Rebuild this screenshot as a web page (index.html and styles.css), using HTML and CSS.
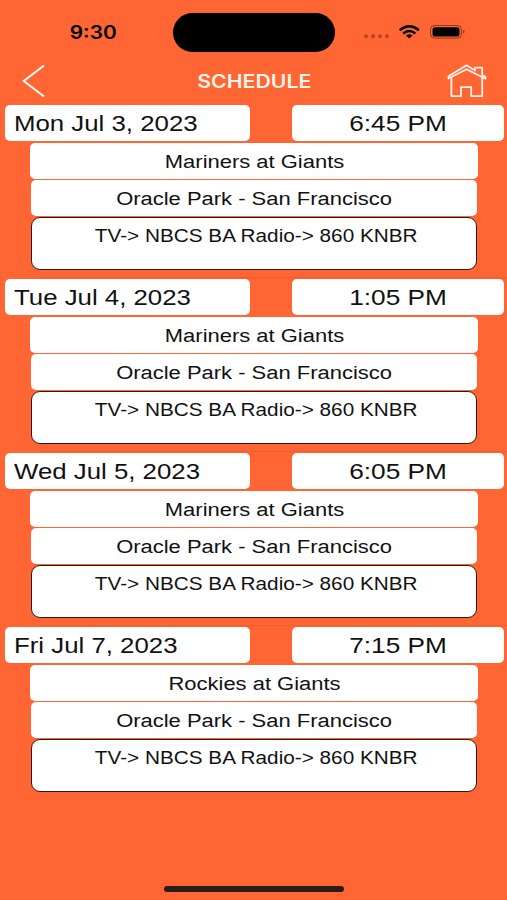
FILE: index.html
```html
<!DOCTYPE html>
<html lang="en">
<head>
    <meta charset="UTF-8">
    <title>Schedule</title>
    <link rel="stylesheet" href="styles.css">
</head>
<body>
    <div class="status-bar">
        <div class="clock"><span>9:30</span></div>
        <div class="island"></div>
        <svg class="status-icons" width="104" height="20" viewBox="0 0 104 20">
            <g fill="#000" fill-opacity="0.3">
                <circle cx="3" cy="14.3" r="2"/>
                <circle cx="10" cy="14.3" r="2"/>
                <circle cx="17" cy="14.3" r="2"/>
                <circle cx="24" cy="14.3" r="2"/>
            </g>
            <g fill="none" stroke="#000" stroke-width="2.5">
                <path d="M36.7 8.2 Q46.3 0.4 55.9 8.2"/>
                <path d="M40.2 11.5 Q46.3 6.4 52.4 11.5"/>
            </g>
            <path d="M43 13.6 Q46.3 11 49.6 13.6 L46.3 16.6 Z"/>
            <rect x="67.5" y="3.5" width="31" height="12.6" rx="4" fill="none" stroke="#000" stroke-opacity="0.45"/>
            <rect x="69.5" y="5.3" width="27" height="9.2" rx="2.6"/>
            <path d="M100.3 7.8 Q102.8 9.8 100.3 11.8 Z" fill-opacity="0.5"/>
        </svg>
    </div>

    <div class="nav-bar">
        <svg class="back" width="24" height="34" viewBox="0 0 24 34">
            <path d="M22 1.5 L1.8 17 L22 32.5" fill="none" stroke="#fff" stroke-width="2"/>
        </svg>
        <h1><span>SCHEDULE</span></h1>
        <svg class="home" width="40" height="34" viewBox="0 0 40 34" fill="none" stroke="#fff3ea" stroke-width="1.8" stroke-linejoin="round">
            <path d="M4.4 13.5 V32.2 H14 V23.2 H24.2 V32.2 H35.2 V13.5"/>
            <path d="M1.5 14.5 V12.2 L19.6 1.3 L28 6.5 V3.7 H35.2 V11 L38.4 12.8 V14.7 L19.6 5.2 Z"/>
        </svg>
    </div>

    <div class="schedule">
        <div class="game">
            <div class="game-head">
                <div class="date"><span>Mon Jul 3, 2023</span></div>
                <div class="time"><span>6:45 PM</span></div>
            </div>
            <div class="teams"><span>Mariners at Giants</span></div>
            <div class="venue"><span>Oracle Park - San Francisco</span></div>
            <div class="media"><span>TV-&gt; NBCS BA Radio-&gt; 860 KNBR</span></div>
        </div>
        <div class="game">
            <div class="game-head">
                <div class="date"><span>Tue Jul 4, 2023</span></div>
                <div class="time"><span>1:05 PM</span></div>
            </div>
            <div class="teams"><span>Mariners at Giants</span></div>
            <div class="venue"><span>Oracle Park - San Francisco</span></div>
            <div class="media"><span>TV-&gt; NBCS BA Radio-&gt; 860 KNBR</span></div>
        </div>
        <div class="game">
            <div class="game-head">
                <div class="date"><span>Wed Jul 5, 2023</span></div>
                <div class="time"><span>6:05 PM</span></div>
            </div>
            <div class="teams"><span>Mariners at Giants</span></div>
            <div class="venue"><span>Oracle Park - San Francisco</span></div>
            <div class="media"><span>TV-&gt; NBCS BA Radio-&gt; 860 KNBR</span></div>
        </div>
        <div class="game">
            <div class="game-head">
                <div class="date"><span>Fri Jul 7, 2023</span></div>
                <div class="time"><span>7:15 PM</span></div>
            </div>
            <div class="teams"><span>Rockies at Giants</span></div>
            <div class="venue"><span>Oracle Park - San Francisco</span></div>
            <div class="media"><span>TV-&gt; NBCS BA Radio-&gt; 860 KNBR</span></div>
        </div>
    </div>

    <div class="home-indicator"></div>
</body>
</html>
```
FILE: styles.css
```css
* {
    margin: 0;
    padding: 0;
    box-sizing: border-box;
}

body {
    display: flex;
    flex-direction: column;
    height: 900px;
    background: #ff6633;
    color: #111;
    font-family: "Liberation Sans", Arial, sans-serif;
    overflow: hidden;
}

/* wide lettering */
span {
    display: inline-block;
    white-space: nowrap;
    transform: scaleX(1.22);
}

.status-bar {
    display: flex;
    align-items: center;
    height: 64px;
}

.clock {
    width: 173px;
    padding-left: 13px;
    text-align: center;
    font-family: Inter, sans-serif;
    font-size: 18px;
    font-weight: 600;
    color: #000;
}

.clock span {
    transform: scaleX(1.16);
}

.island {
    width: 162px;
    height: 39px;
    border-radius: 20px;
    background: #000;
}

.status-icons {
    margin-left: 28px;
}

.nav-bar {
    display: flex;
    justify-content: space-between;
    align-items: center;
    height: 34px;
    padding: 0 20px 0 22px;
}

h1 {
    padding-left: 15px;
    font-family: Inter, sans-serif;
    font-size: 18px;
    font-weight: 600;
    color: #fff3ea;
}

h1 span {
    transform: scaleX(1.18);
}

.schedule {
    flex: 1;
    padding-top: 7px;
}

.game {
    height: 174px;
}

.game + .game {
    position: relative;
}

/* hairline between two games */
.game + .game::before {
    content: '';
    position: absolute;
    top: -2px;
    left: 40px;
    right: 0;
    height: 1px;
    background: #ee5f30;
}

.game-head {
    display: flex;
    justify-content: space-between;
    padding: 0 3px 0 5px;
    margin-bottom: 2px;
    font-size: 21.5px;
    line-height: 38px;
}

.date,
.time,
.teams,
.venue {
    height: 36px;
    background: #fff;
    border-radius: 5px;
}

.date {
    width: 244.5px;
    padding-left: 9px;
}

.date span {
    transform: scaleX(1.2);
    transform-origin: left;
}

.time {
    width: 212.5px;
    text-align: center;
}

.teams,
.venue,
.media {
    font-size: 18px;
    text-align: center;
}

.teams {
    margin: 0 29px 1px 30px;
    padding-left: 1px;
    line-height: 38px;
}

.venue {
    margin: 0 30px 1px 31px;
    line-height: 38px;
}

.media {
    height: 53px;
    margin: 0 30px 0 31px;
    padding: 8px 0 0 5px;
    font-size: 17.5px;
    line-height: 21px;
    background: #fff;
    border: 1.5px solid #2b1a14;
    border-radius: 9px;
}

.media span {
    transform: scaleX(1.185);
}

.home-indicator {
    width: 180px;
    height: 6px;
    margin: 0 auto 8px;
    border-radius: 3px;
    background: #281d1a;
}
```
